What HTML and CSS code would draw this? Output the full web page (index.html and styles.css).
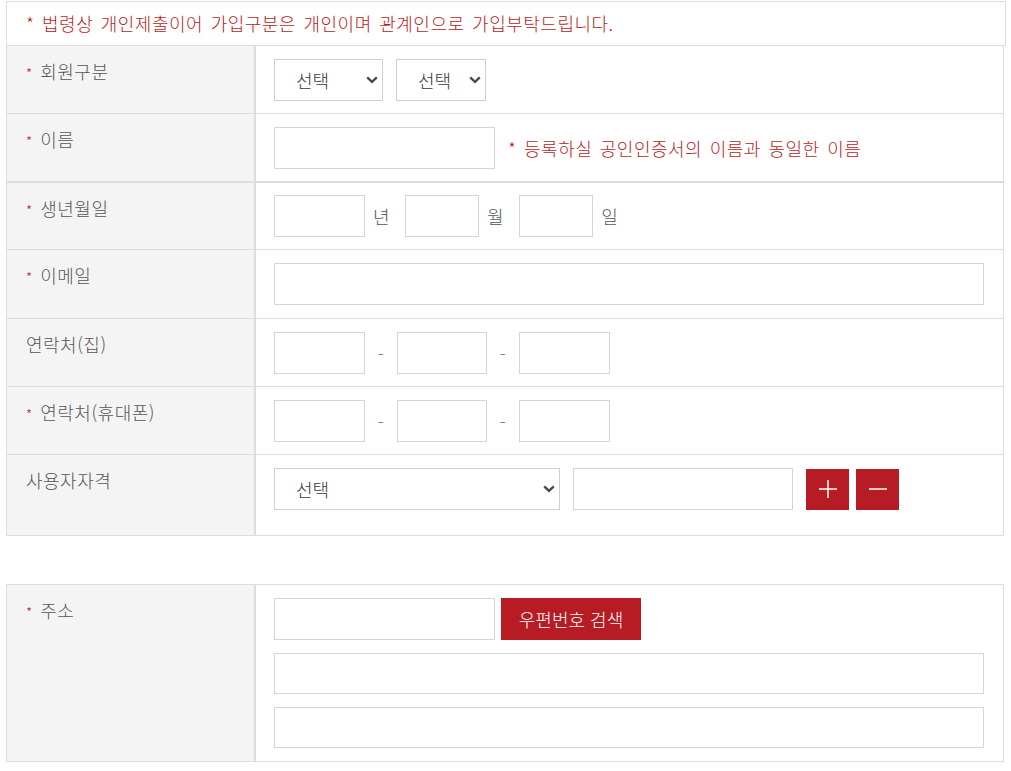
FILE: index.html
```html
<!DOCTYPE html>
<html lang="ko">
<head>
<meta charset="utf-8">
<title>회원가입</title>
<link rel="stylesheet" href="styles.css">
</head>
<body>
<div class="page">
  <div class="notice">* 법령상 개인제출이어 가입구분은 개인이며 관계인으로 가입부탁드립니다.</div>

  <div class="form-table">
    <div class="row">
      <div class="th"><span class="req">*</span> 회원구분</div>
      <div class="td">
        <span class="sel-wrap sel-a">
          <select class="sel"><option>선택</option></select>
          <svg class="chev" width="12" height="8" viewBox="0 0 12 8"><path d="M1.2 1.3l4.8 4.6 4.8-4.6" stroke="#4a4a50" stroke-width="2.4" fill="none"/></svg>
        </span>
        <span class="sel-wrap sel-b">
          <select class="sel"><option>선택</option></select>
          <svg class="chev" width="12" height="8" viewBox="0 0 12 8"><path d="M1.2 1.3l4.8 4.6 4.8-4.6" stroke="#4a4a50" stroke-width="2.4" fill="none"/></svg>
        </span>
      </div>
    </div>
    <div class="row row-thick">
      <div class="th"><span class="req">*</span> 이름</div>
      <div class="td">
        <input class="inp w-name" type="text">
        <span class="note">* 등록하실 공인인증서의 이름과 동일한 이름</span>
      </div>
    </div>
    <div class="row row-birth">
      <div class="th"><span class="req">*</span> 생년월일</div>
      <div class="td">
        <input class="inp w-year" type="text"><span class="unit">년</span>
        <input class="inp w-md" type="text"><span class="unit">월</span>
        <input class="inp w-md" type="text"><span class="unit">일</span>
      </div>
    </div>
    <div class="row row-email">
      <div class="th"><span class="req">*</span> 이메일</div>
      <div class="td">
        <input class="inp w-full" type="text">
      </div>
    </div>
    <div class="row">
      <div class="th">연락처(집)</div>
      <div class="td">
        <input class="inp w-tel" type="text"><span class="dash">-</span><input class="inp w-tel2" type="text"><span class="dash">-</span><input class="inp w-tel" type="text">
      </div>
    </div>
    <div class="row">
      <div class="th"><span class="req">*</span> 연락처(휴대폰)</div>
      <div class="td">
        <input class="inp w-tel" type="text"><span class="dash">-</span><input class="inp w-tel2" type="text"><span class="dash">-</span><input class="inp w-tel" type="text">
      </div>
    </div>
    <div class="row row-last">
      <div class="th">사용자자격</div>
      <div class="td">
        <span class="sel-wrap sel-q">
          <select class="sel"><option>선택</option></select>
          <svg class="chev" width="12" height="8" viewBox="0 0 12 8"><path d="M1.2 1.3l4.8 4.6 4.8-4.6" stroke="#4a4a50" stroke-width="2.4" fill="none"/></svg>
        </span>
        <input class="inp w-qual" type="text">
        <button class="btn-sq" type="button" aria-label="추가">
          <svg width="20" height="20" viewBox="0 0 20 20"><path d="M10 1v18M1 10h18" stroke="#fff" stroke-width="1.5" fill="none"/></svg>
        </button>
        <button class="btn-sq btn-minus" type="button" aria-label="삭제">
          <svg width="20" height="20" viewBox="0 0 20 20"><path d="M1 10h18" stroke="#fff" stroke-width="1.5" fill="none"/></svg>
        </button>
      </div>
    </div>
  </div>

  <div class="form-table addr-table">
    <div class="row row-last">
      <div class="th"><span class="req">*</span> 주소</div>
      <div class="td td-stack">
        <div class="line">
          <input class="inp w-name" type="text">
          <button class="btn-zip" type="button">우편번호 검색</button>
        </div>
        <input class="inp w-full w-addr" type="text">
        <input class="inp w-full w-addr" type="text">
      </div>
    </div>
  </div>
</div>
</body>
</html>
```

FILE: styles.css
```css
* { box-sizing: border-box; }

html, body {
  margin: 0;
  padding: 0;
  background: #fff;
}

body {
  font-family: "Noto Sans CJK KR", "Noto Sans", sans-serif;
  font-size: 18px;
  font-weight: 300;
  letter-spacing: 0.5px;
  word-spacing: 2px;
  line-height: 24px;
  color: #555;
}

.page {
  padding: 1px 6px 0 6px;
  width: 1011px;
}

.notice {
  width: 1000px;
  border: 1px solid #ddd;
  padding: 9px 19px 10px;
  color: #b71c24;
}

.form-table {
  width: 998px;
  border: 1px solid #ddd;
  border-top: none;
}

.addr-table {
  margin-top: 48px;
  border-top: 1px solid #ddd;
}

.row {
  display: grid;
  grid-template-columns: 249px 1fr;
  border-bottom: 1px solid #ddd;
}

.row.row-last { border-bottom: none; }

.row-thick { border-bottom-width: 2px; }
.row-birth .td { padding-top: 12px; }
.row-email .td { padding-bottom: 13px; }

.th {
  background: #f4f4f4;
  border-right: 2px solid #ddd;
  padding: 13px 19px;
  color: #555;
}

.req {
  color: #b71c24;
  font-size: 14px;
}

.td {
  display: flex;
  align-items: center;
  align-self: start;
  padding: 13px 19px 12px 18px;
}

.row-last .td { padding-bottom: 25px; }

.addr-table .td-stack {
  flex-direction: column;
  align-items: stretch;
  gap: 13px;
  padding-bottom: 13px;
}

.line {
  display: flex;
  align-items: center;
}

.inp {
  height: 42px;
  border: 1px solid #d5d5d5;
  background: #fff;
  padding: 0 10px;
  font: inherit;
  margin: 0;
  outline: none;
}

.w-addr { height: 41px; }

.sel-wrap {
  position: relative;
  display: block;
  height: 42px;
}

.sel {
  appearance: none;
  -webkit-appearance: none;
  width: 100%;
  height: 42px;
  border: 1px solid #ccd0d5;
  border-radius: 0;
  background-color: #fff;
  padding: 0 24px 0 21px;
  font: inherit;
  color: #3a3a3a;
  margin: 0;
  outline: none;
}

.chev {
  position: absolute;
  right: 5px;
  top: 17px;
  pointer-events: none;
}

.sel-a { width: 109px; }
.sel-b { width: 90px; margin-left: 13px; }
.sel-q { width: 286px; }

.w-name { width: 221px; }
.w-year { width: 91px; }
.w-md { width: 74px; }
.w-tel { width: 91px; }
.w-tel2 { width: 90px; }
.w-qual { width: 220px; margin-left: 13px; }
.w-full { width: 100%; }

.note {
  margin-left: 13px;
  color: #b71c24;
}

.unit {
  margin: 0 15px 0 8px;
  color: #555;
}

.dash {
  width: 32px;
  text-align: center;
  color: #777;
}

.btn-sq {
  width: 43px;
  height: 41px;
  margin: 0 0 0 13px;
  padding: 0;
  border: none;
  background: #b71c24;
  display: flex;
  align-items: center;
  justify-content: center;
}

.btn-minus { margin-left: 7px; }

.btn-zip {
  height: 42px;
  width: 140px;
  margin-left: 6px;
  border: none;
  background: #b71c24;
  color: #fff;
  font: inherit;
  padding: 0;
}
```
